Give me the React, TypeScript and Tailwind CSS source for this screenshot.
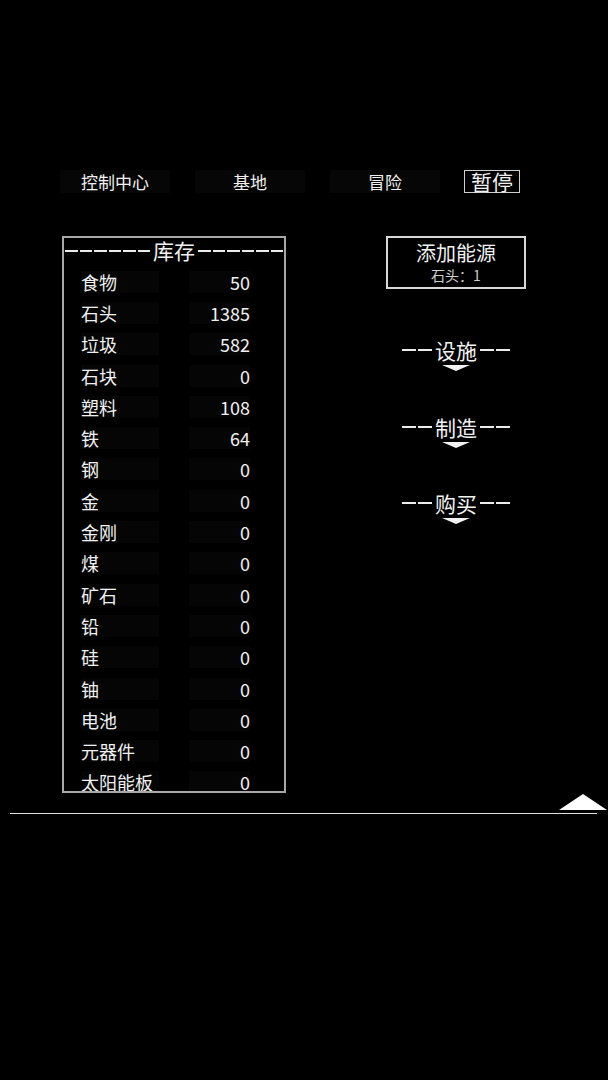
import React from "react";

const items: [string, string][] = [
  ["食物", "50"],
  ["石头", "1385"],
  ["垃圾", "582"],
  ["石块", "0"],
  ["塑料", "108"],
  ["铁", "64"],
  ["钢", "0"],
  ["金", "0"],
  ["金刚", "0"],
  ["煤", "0"],
  ["矿石", "0"],
  ["铅", "0"],
  ["硅", "0"],
  ["铀", "0"],
  ["电池", "0"],
  ["元器件", "0"],
  ["太阳能板", "0"],
];

function Dashes({ n, w }: { n: number; w: string }) {
  return (
    <div className="flex items-center gap-[2px]">
      {Array.from({ length: n }).map((_, i) => (
        <div key={i} className={`${w} h-[2px] bg-[#ececec]`} />
      ))}
    </div>
  );
}

function Section({ title, mt }: { title: string; mt: string }) {
  return (
    <div className={`flex flex-col items-center ${mt}`}>
      <div className="h-[24px] flex items-center gap-[2px] text-[21px] leading-none text-[#f2f2f2]">
        <Dashes n={2} w="w-[14px]" />
        <span className="px-[1px]">{title}</span>
        <Dashes n={2} w="w-[14px]" />
      </div>
      <svg width="28" height="6" viewBox="0 0 28 6" className="mt-[3px]">
        <polygon points="0,0 28,0 14,6" fill="#f2f2f2" />
      </svg>
    </div>
  );
}

export default function App() {
  return (
    <div className="w-[608px] h-[1080px] bg-black text-[#f0f0f0] overflow-hidden font-['Noto_Sans_CJK_SC','Noto_Sans',sans-serif]">
      {/* top tabs */}
      <div className="pt-[170px] flex items-center pl-[60px]">
        <div className="w-[110px] h-[23px] bg-[#060606] flex items-center justify-center text-[17px] leading-none">控制中心</div>
        <div className="ml-[25px] w-[110px] h-[23px] bg-[#060606] flex items-center justify-center text-[17px] leading-none">基地</div>
        <div className="ml-[25px] w-[110px] h-[23px] bg-[#060606] flex items-center justify-center text-[17px] leading-none">冒险</div>
        <div className="ml-[24px] w-[56px] h-[23px] border border-[#d0d0d0] flex items-center justify-center text-[21px] leading-none">暂停</div>
      </div>

      {/* main */}
      <div className="mt-[43px] flex items-start">
        <div className="ml-[62px] w-[224px] h-[557px] border-2 border-[#a8a8a8] overflow-hidden">
          <div className="h-[28px] pb-[3px] flex items-center px-[1px] gap-[2px]">
            <div className="flex-1 flex items-center gap-[2px]">
              {Array.from({ length: 6 }).map((_, i) => (
                <div key={i} className="flex-1 h-[2px] bg-[#ececec]" />
              ))}
            </div>
            <span className="text-[21px] leading-none px-[1px]">库存</span>
            <div className="flex-1 flex items-center gap-[2px]">
              {Array.from({ length: 6 }).map((_, i) => (
                <div key={i} className="flex-1 h-[2px] bg-[#ececec]" />
              ))}
            </div>
          </div>
          {items.map(([k, v]) => (
            <div key={k} className="h-[31.3px] flex items-center text-[18px] leading-none">
              <span className="ml-[17px] w-[78px] h-[22px] flex items-center bg-[#050505] whitespace-nowrap">{k}</span>
              <span className="ml-[30px] w-[61px] h-[22px] flex items-center justify-end bg-[#050505]">{v}</span>
            </div>
          ))}
        </div>

        <div className="ml-[100px] w-[140px] flex flex-col">
          <div className="h-[53px] border-2 border-[#d8d8d8] flex flex-col items-center justify-center">
            <div className="text-[20px] leading-none">添加能源</div>
            <div className="text-[14px] leading-none mt-[5px] text-[#cfcfcf]">石头：1</div>
          </div>
          <Section title="设施" mt="mt-[49px]" />
          <Section title="制造" mt="mt-[44px]" />
          <Section title="购买" mt="mt-[43px]" />
        </div>
      </div>

      {/* bottom */}
      <div className="mt-[1px] flex flex-col">
        <svg width="48" height="16" viewBox="0 0 48 16" className="self-end mr-[1px]">
          <polygon points="0,16 48,16 24,0" fill="#ffffff" />
        </svg>
        <div className="mt-[3px] ml-[10px] w-[587px] h-px bg-[#e0e0e0]" />
      </div>
    </div>
  );
}
